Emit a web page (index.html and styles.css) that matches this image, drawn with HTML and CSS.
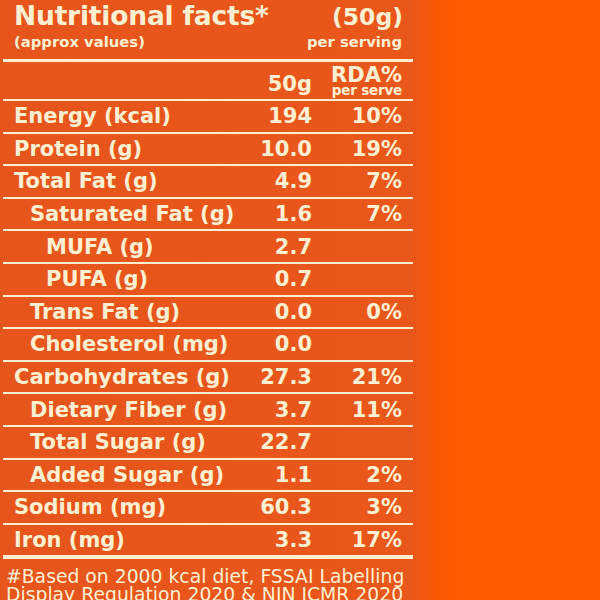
FILE: index.html
```html
<!DOCTYPE html>
<html>
<head>
<meta charset="utf-8">
<link rel="stylesheet" href="styles.css">
</head>
<body>
<div class="panel">
  <div class="title-block">
    <div class="title-row">
      <span class="title">Nutritional facts*</span>
      <span class="serving">(50g)</span>
    </div>
    <div class="sub-row">
      <span>(approx values)</span>
      <span>per serving</span>
    </div>
  </div>
  <div class="table">
    <div class="row head">
      <span class="lbl"></span>
      <span class="val">50g</span>
      <span class="pct rda"><span class="rda-main">RDA%</span><small>per serve</small></span>
    </div>
    <div class="row"><span class="lbl">Energy (kcal)</span><span class="val">194</span><span class="pct">10%</span></div>
    <div class="row"><span class="lbl">Protein (g)</span><span class="val">10.0</span><span class="pct">19%</span></div>
    <div class="row"><span class="lbl">Total Fat (g)</span><span class="val">4.9</span><span class="pct">7%</span></div>
    <div class="row"><span class="lbl l1">Saturated Fat (g)</span><span class="val">1.6</span><span class="pct">7%</span></div>
    <div class="row"><span class="lbl l2">MUFA (g)</span><span class="val">2.7</span><span class="pct"></span></div>
    <div class="row"><span class="lbl l2">PUFA (g)</span><span class="val">0.7</span><span class="pct"></span></div>
    <div class="row"><span class="lbl l1">Trans Fat (g)</span><span class="val">0.0</span><span class="pct">0%</span></div>
    <div class="row"><span class="lbl l1">Cholesterol (mg)</span><span class="val">0.0</span><span class="pct"></span></div>
    <div class="row"><span class="lbl">Carbohydrates (g)</span><span class="val">27.3</span><span class="pct">21%</span></div>
    <div class="row"><span class="lbl l1">Dietary Fiber (g)</span><span class="val">3.7</span><span class="pct">11%</span></div>
    <div class="row"><span class="lbl l1">Total Sugar (g)</span><span class="val">22.7</span><span class="pct"></span></div>
    <div class="row"><span class="lbl l1">Added Sugar (g)</span><span class="val">1.1</span><span class="pct">2%</span></div>
    <div class="row"><span class="lbl">Sodium (mg)</span><span class="val">60.3</span><span class="pct">3%</span></div>
    <div class="row last"><span class="lbl">Iron (mg)</span><span class="val">3.3</span><span class="pct">17%</span></div>
  </div>
  <p class="foot">#Based on 2000 kcal diet, FSSAI Labelling Display Regulation 2020 &amp; NIN ICMR 2020</p>
</div>
</body>
</html>
```
FILE: styles.css
```css
html, body {
  margin: 0;
  padding: 0;
}
body {
  width: 600px;
  height: 600px;
  overflow: hidden;
  background: linear-gradient(to right, #e6551c 0, #ea571b 410px, #fb5903 440px, #ff5a00 470px);
  font-family: "DejaVu Sans", "Liberation Sans", sans-serif;
  color: #fdf0d2;
}
.panel {
  width: 410px;
  margin-left: 3px;
}
.title-block {
  height: 59px;
  padding: 0 11px;
  box-sizing: border-box;
}
.title-row {
  display: flex;
  justify-content: space-between;
  align-items: baseline;
  height: 32px;
  line-height: 32px;
}
.title {
  font-size: 26.5px;
  font-weight: 700;
  letter-spacing: -0.2px;
}
.serving {
  font-size: 23.5px;
  font-weight: 700;
  margin-right: -1px;
}
.sub-row {
  display: flex;
  justify-content: space-between;
  align-items: baseline;
  font-size: 14.8px;
  font-weight: 700;
  line-height: 20px;
}
.table {
  border-top: 3px solid #fdf0d2;
  border-bottom: 4px solid #fdf0d2;
}
.row {
  display: grid;
  grid-template-columns: minmax(0, 1fr) 90px 90px;
  align-items: center;
  height: 32.6px;
  box-sizing: border-box;
  border-top: 2px solid #fdf0d2;
  padding: 0 11px;
  font-size: 21px;
  font-weight: 700;
  line-height: 24px;
}
.row.head {
  border-top: none;
  height: 37px;
  align-items: end;
}
.lbl {
  white-space: nowrap;
}
.l1 { padding-left: 16px; }
.l2 { padding-left: 32px; }
.val, .pct {
  text-align: right;
  white-space: nowrap;
}
.head .val {
  padding-bottom: 3px;
}
.rda {
  display: flex;
  flex-direction: column;
  align-items: flex-end;
  padding-bottom: 3px;
}
.rda-main {
  font-size: 21px;
  line-height: 20px;
}
.rda small {
  font-size: 13.5px;
  line-height: 11px;
  font-weight: 700;
  letter-spacing: -0.2px;
}
.foot {
  margin: 9px 0 0 3px;
  font-size: 18.8px;
  line-height: 18px;
  font-weight: 400;
  width: 410px;
}
```
